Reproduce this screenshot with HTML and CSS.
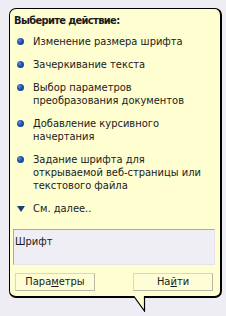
FILE: index.html
```html
<!DOCTYPE html>
<html>
<head>
<meta charset="utf-8">
<link rel="stylesheet" href="styles.css">
</head>
<body>
<div class="balloon">
  <div class="title">Выберите действие:</div>
  <ul class="list">
    <li><span class="dot"></span><span class="txt">Изменение размера шрифта</span></li>
    <li><span class="dot"></span><span class="txt">Зачеркивание текста</span></li>
    <li><span class="dot"></span><span class="txt">Выбор параметров преобразования документов</span></li>
    <li><span class="dot"></span><span class="txt">Добавление курсивного начертания</span></li>
    <li><span class="dot"></span><span class="txt">Задание шрифта для открываемой веб-страницы или текстового файла</span></li>
    <li class="more"><span class="tri"></span><span class="txt">См. далее..</span></li>
  </ul>
  <div class="field">Шрифт</div>
  <div class="buttons">
    <div class="btn btn-left">Пара<u>м</u>етры</div>
    <div class="btn btn-right">На<u>й</u>ти</div>
  </div>
  <svg class="tail" width="14" height="16" viewBox="0 0 14 16">
    <polygon points="0,0 11,0 11,15" fill="#fefed0"/>
    <polyline points="0,0.5 10.5,15 10.5,0" fill="none" stroke="#000" stroke-width="1.2"/>
  </svg>
</div>
</body>
</html>
```
FILE: styles.css
```css
html, body {
  margin: 0;
  padding: 0;
  background: #efedf4;
  width: 226px;
  height: 316px;
  overflow: hidden;
}
body {
  font-family: "DejaVu Sans Condensed", "DejaVu Sans", sans-serif;
  font-stretch: condensed;
  font-size: 11px;
  color: #1a1a1a;
}
.balloon {
  position: relative;
  margin: 8px 0 0 9px;
  width: 210px;
  height: 287px;
  background: #fefed0;
  border: 1px solid #000;
  border-right-width: 2px;
  border-bottom-width: 2px;
  border-radius: 7px;
  display: flex;
  flex-direction: column;
}
.title {
  font-weight: bold;
  line-height: 14px;
  margin: 5px 0 0 4px;
  letter-spacing: -0.65px;
}
.list {
  list-style: none;
  margin: 7px 0 0 0;
  padding: 0;
  display: flex;
  flex-direction: column;
  gap: 10px;
}
.list li {
  display: flex;
  align-items: flex-start;
  line-height: 13px;
}
.dot {
  flex: none;
  width: 7px;
  height: 7px;
  margin: 3px 9px 0 7px;
  border-radius: 50%;
  background: radial-gradient(circle at 35% 35%, #5f8ddb 0, #1f4fae 45%, #12347a 100%);
}
.tri {
  flex: none;
  width: 0;
  height: 0;
  margin: 4px 8px 0 7px;
  border-left: 4.5px solid transparent;
  border-right: 4.5px solid transparent;
  border-top: 6px solid #1c3e78;
}
.txt {
  width: 182px;
}
.field {
  margin: 14px 5px 0 3px;
  height: 36px;
  background: #efeef4;
  border: 1px solid #aaa9b2;
  border-right-color: #e4e3ea;
  border-bottom-color: #e4e3ea;
  padding: 5px 0 0 1px;
  box-sizing: border-box;
  line-height: 13px;
}
.buttons {
  display: flex;
  justify-content: space-between;
  margin: 8px 7px 0 5px;
}
.btn {
  width: 80px;
  height: 18px;
  box-sizing: border-box;
  line-height: 16px;
  text-align: center;
  border: 1px solid #d8d7c4;
  border-right-color: #b9b8a6;
  border-bottom-color: #b9b8a6;
  background: #fefed6;
}
.btn u {
  text-decoration-thickness: 1px;
  text-underline-offset: 1px;
}
.tail {
  position: absolute;
  left: 124px;
  bottom: -16px;
}
```
